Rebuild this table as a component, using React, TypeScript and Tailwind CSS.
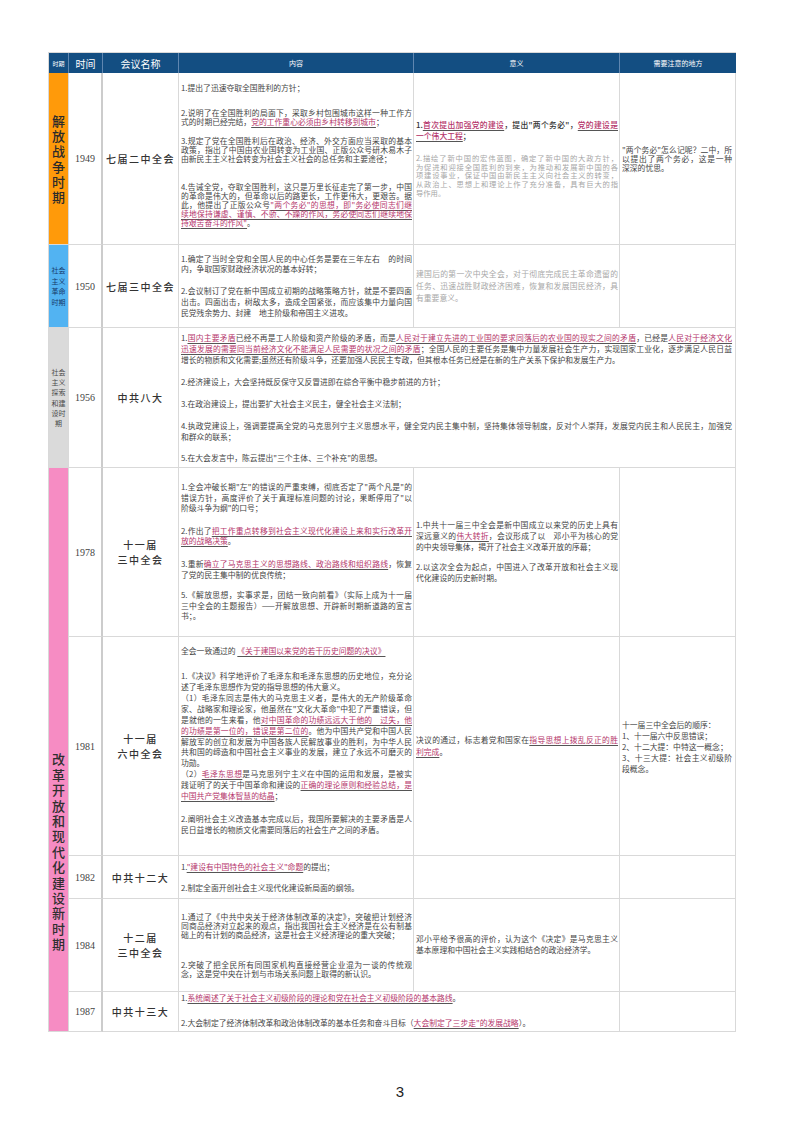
import React from "react";

type Node = React.ReactNode;

const H = ({ children }: { children: Node }) => (
  <span className="text-[#b5356b] underline decoration-[#555] underline-offset-[1.5px]">{children}</span>
);

// one paragraph, written line by line; every line but the last is justified
function P({ lines, className = "", end = true }: { lines: Node[]; className?: string; end?: boolean }) {
  return (
    <div className={className}>
      {lines.map((l, i) => (
        <div key={i} className={i < lines.length - 1 || !end ? "[text-align-last:justify]" : ""}>
          {l}
        </div>
      ))}
    </div>
  );
}

const cell = "border-r border-b border-[#d9d9d9]";
const txt = "flex flex-col justify-center pl-[2px] pr-[1px] text-[7.8px] text-[#444]";
const year = `${cell} border-r-[2px] border-r-[#cccccc] flex items-center justify-center font-['Liberation_Serif',serif] text-[10px] text-[#444]`;
const name = `${cell} flex flex-col items-center justify-center text-[10px] leading-[15px] tracking-[1.5px] font-medium text-[#333]`;

export default function App() {
  return (
    <div className="w-[800px] h-[1132px] bg-white font-['Noto_Sans_CJK_SC','Noto_Sans',sans-serif]">
      <div className="pt-[52px] pl-[48px]">
        <div className="grid w-fit grid-cols-[20px_34px_76px_235px_206px_116px] grid-rows-[20px_172px_83px_140px_169px_219px_43px_93px_40px] border-l border-t border-[#d9d9d9]">
          {/* header */}
          <div className="bg-[#134e82] border-r border-[#5f86b0] flex items-center justify-center text-white text-[6px]">时期</div>
          <div className="bg-[#134e82] border-r border-[#5f86b0] flex items-center justify-center text-white text-[10px]">时间</div>
          <div className="bg-[#134e82] border-r border-[#5f86b0] flex items-center justify-center text-white text-[10px]">会议名称</div>
          <div className="bg-[#134e82] border-r border-[#5f86b0] flex items-center justify-center text-white text-[7px]">内容</div>
          <div className="bg-[#134e82] border-r border-[#5f86b0] flex items-center justify-center text-white text-[7px]">意义</div>
          <div className="bg-[#134e82] flex items-center justify-center text-white text-[7px]">需要注意的地方</div>

          {/* 1949 */}
          <div className={`${cell} bg-[#ff9a0a] flex items-center justify-center text-center text-[13px] leading-[15.3px] font-medium text-[#2b2b2b] px-[3px]`}>
            解放战争时期
          </div>
          <div className={year}>1949</div>
          <div className={name}>七届二中全会</div>
          <div className={`${cell} ${txt} leading-[9.2px] pb-[6px]`}>
            <P lines={["1.提出了迅速夺取全国胜利的方针；"]} />
            <P
              className="mt-[15px]"
              lines={[
                "2.说明了在全国胜利的局面下，采取乡村包围城市这样一种工作方",
                <>式的时期已经完结，<H>党的工作重心必须由乡村转移到城市</H>；</>,
              ]}
            />
            <P
              className="mt-[10px]"
              lines={[
                "3.规定了党在全国胜利后在政治、经济、外交方面应当采取的基本",
                "政策，指出了中国由农业国转变为工业国、正版公众号研木易木子",
                "由新民主主义社会转变为社会主义社会的总任务和主要途径；",
              ]}
            />
            <P
              className="mt-[18px]"
              lines={[
                "4.告诫全党，夺取全国胜利，这只是万里长征走完了第一步，中国",
                "的革命是伟大的，但革命以后的路更长，工作更伟大，更艰苦。据",
                <>此，他提出了正版公众号<H>"两个务必"的思想，即"务必使同志们继</H></>,
                <H>续地保持谦虚、谨慎、不骄、不躁的作风，务必使同志们继续地保</H>,
                <><H>持艰苦奋斗的作风"</H>。</>,
              ]}
            />
          </div>
          <div className={`${cell} ${txt}`}>
            <P
              className="leading-[10.7px] text-[#333] font-medium"
              lines={[
                <>1.<H>首次提出加强党的建设</H>，提出"两个务必"，<H>党的建设是</H></>,
                <><H>一个伟大工程</H>；</>,
              ]}
            />
            <P
              className="mt-[13px] leading-[8.6px] text-[7.3px] text-[#a6a6a6]"
              lines={[
                "2.描绘了新中国的宏伟蓝图，确定了新中国的大政方针，",
                "为促进和迎接全国胜利的到来，为推动和发展新中国的各",
                "项建设事业，保证中国由新民主主义向社会主义的转变，",
                "从政治上、思想上和理论上作了充分准备，具有巨大的指",
                "导作用。",
              ]}
            />
          </div>
          <div className={`${cell} ${txt} pr-[3px] leading-[9px] text-[#333]`}>
            <P lines={['"两个务必"怎么记呢？二中，所', "以提出了两个务必，这是一种", "深深的忧思。"]} />
          </div>

          {/* 1950 */}
          <div className={`${cell} bg-[#52b3f2] flex items-center justify-center text-center text-[7px] leading-[10.5px] text-[#173a6a] px-[2px]`}>
            社会主义革命时期
          </div>
          <div className={year}>1950</div>
          <div className={name}>七届三中全会</div>
          <div className={`${cell} ${txt} leading-[10.7px]`}>
            <P
              lines={[
                "1.确定了当时全党和全国人民的中心任务是要在三年左右　的时间",
                "内，争取国家财政经济状况的基本好转；",
              ]}
            />
            <P
              className="mt-[11px]"
              lines={[
                "2.会议制订了党在新中国成立初期的战略策略方针，就是不要四面",
                "出击。四面出击，树敌太多，造成全国紧张，而应该集中力量向国",
                "民党残余势力、封建　地主阶级和帝国主义进攻。",
              ]}
            />
          </div>
          <div className={`${cell} ${txt} leading-[11.7px] text-[7.4px] text-[#a8a8a8]`}>
            <P
              lines={[
                "建国后的第一次中央全会，对于彻底完成民主革命遗留的",
                "任务、迅速战胜财政经济困难，恢复和发展国民经济，具",
                "有重要意义。",
              ]}
            />
          </div>
          <div className={cell} />

          {/* 1956 */}
          <div className={`${cell} bg-[#dadada] flex items-center justify-center text-center text-[7px] leading-[10.3px] text-[#4a4a4a] px-[2px]`}>
            社会主义探索和建设时期
          </div>
          <div className={year}>1956</div>
          <div className={name}>中共八大</div>
          <div className={`${cell} ${txt} col-span-3 leading-[11px] pr-[3px]`}>
            <P
              lines={[
                <>
                  1.<H>国内主要矛盾</H>已经不再是工人阶级和资产阶级的矛盾，而是
                  <H>人民对于建立先进的工业国的要求同落后的农业国的现实之间的矛盾</H>，已经是<H>人民对于经济文化</H>
                </>,
                <>
                  <H>迅速发展的需要同当前经济文化不能满足人民需要的状况之间的矛盾</H>
                  ；全国人民的主要任务是集中力量发展社会生产力，实现国家工业化，逐步满足人民日益
                </>,
                "增长的物质和文化需要;虽然还有阶级斗争，还要加强人民民主专政，但其根本任务已经是在新的生产关系下保护和发展生产力。",
              ]}
            />
            <P className="mt-[11px]" lines={["2.经济建设上，大会坚持既反保守又反冒进即在综合平衡中稳步前进的方针；"]} />
            <P className="mt-[11px]" lines={["3.在政治建设上，提出要扩大社会主义民主，健全社会主义法制；"]} />
            <P
              className="mt-[11px]"
              lines={[
                "4.执政党建设上，强调要提高全党的马克思列宁主义思想水平，健全党内民主集中制，坚持集体领导制度，反对个人崇拜，发展党内民主和人民民主，加强党",
                "和群众的联系；",
              ]}
            />
            <P className="mt-[10px]" lines={['5.在大会发言中，陈云提出"三个主体、三个补充"的思想。']} />
          </div>

          {/* 1978 */}
          <div className={`${cell} row-span-5 bg-[#f68cc3] flex items-center justify-center text-center text-[13px] leading-[15.4px] font-medium text-[#2f2f2f] px-[3px] pt-[204px]`}>
            改革开放和现代化建设新时期
          </div>
          <div className={year}>1978</div>
          <div className={name}>
            <span>十一届</span>
            <span>三中全会</span>
          </div>
          <div className={`${cell} ${txt} leading-[10.6px]`}>
            <P
              lines={[
                '1.全会冲破长期"左"的错误的严重束缚，彻底否定了"两个凡是"的',
                '错误方针，高度评价了关于真理标准问题的讨论，果断停用了"以',
                '阶级斗争为纲"的口号；',
              ]}
            />
            <P
              className="mt-[12px]"
              lines={[
                <>2.作出了<H>把工作重点转移到社会主义现代化建设上来和实行改革开</H></>,
                <><H>放的战略决策</H>。</>,
              ]}
            />
            <P
              className="mt-[12px]"
              lines={[
                <>3.重新<H>确立了马克思主义的思想路线、政治路线和组织路线</H>，恢复</>,
                "了党的民主集中制的优良传统；",
              ]}
            />
            <P
              className="mt-[10px]"
              lines={[
                "5.《解放思想，实事求是，团结一致向前看》（实际上成为十一届",
                "三中全会的主题报告）——开解放思想、开辟新时期新道路的宣言",
                "书；。",
              ]}
            />
          </div>
          <div className={`${cell} ${txt} leading-[10.8px]`}>
            <P
              lines={[
                "1.中共十一届三中全会是新中国成立以来党的历史上具有",
                <>深远意义的<H>伟大转折</H>，会议形成了以　邓小平为核心的党</>,
                "的中央领导集体，揭开了社会主义改革开放的序幕；",
              ]}
            />
            <P className="mt-[10px]" lines={["2.以这次全会为起点，中国进入了改革开放和社会主义现", "代化建设的历史新时期。"]} />
          </div>
          <div className={cell} />

          {/* 1981 */}
          <div className={year}>1981</div>
          <div className={name}>
            <span>十一届</span>
            <span>六中全会</span>
          </div>
          <div className={`${cell} ${txt} leading-[10.9px] pb-[10px]`}>
            <P lines={[<>全会一致通过的 <H>《关于建国以来党的若干历史问题的决议》</H></>]} />
            <P
              className="mt-[14px]"
              lines={["1.《决议》科学地评价了毛泽东和毛泽东思想的历史地位，充分论", "述了毛泽东思想作为党的指导思想的伟大意义。"]}
            />
            <P
              lines={[
                "（1）毛泽东同志是伟大的马克思主义者，是伟大的无产阶级革命",
                '家、战略家和理论家，他虽然在"文化大革命"中犯了严重错误，但',
                <>是就他的一生来看，他<H>对中国革命的功绩远远大于他的　过失，他</H></>,
                <><H>的功绩是第一位的，错误是第二位的</H>。他为中国共产党和中国人民</>,
                "解放军的创立和发展为中国各族人民解放事业的胜利，为中华人民",
                "共和国的缔造和中国社会主义事业的发展，建立了永远不可磨灭的",
                "功勋。",
              ]}
            />
            <P
              lines={[
                <>（2）<H>毛泽东思想</H>是马克思列宁主义在中国的运用和发展，是被实</>,
                <>践证明了的关于中国革命和建设的<H>正确的理论原则和经验总结，是</H></>,
                <><H>中国共产党集体智慧的结晶</H>；</>,
              ]}
            />
            <P
              className="mt-[12px]"
              lines={["2.阐明社会主义改造基本完成以后，我国所要解决的主要矛盾是人", "民日益增长的物质文化需要同落后的社会生产之间的矛盾。"]}
            />
          </div>
          <div className={`${cell} ${txt} leading-[12px]`}>
            <P lines={[<>决议的通过，标志着党和国家在<H>指导思想上拨乱反正的胜</H></>, <><H>利完成</H>。</>]} />
          </div>
          <div className={`${cell} ${txt} leading-[11px] text-[#333]`}>
            <div>十一届三中全会后的顺序：</div>
            <div>1、十一届六中反思错误；</div>
            <div>2、十二大提：中特这一概念；</div>
            <div className="[text-align-last:justify] pr-[2px]">3、十三大提：社会主义初级阶</div>
            <div>段概念。</div>
          </div>

          {/* 1982 */}
          <div className={year}>1982</div>
          <div className={name}>中共十二大</div>
          <div className={`${cell} ${txt} leading-[10px]`}>
            <P lines={[<>1.<H>"建设有中国特色的社会主义"命题</H>的提出；</>]} />
            <P className="mt-[11px]" lines={["2.制定全面开创社会主义现代化建设新局面的纲领。"]} />
          </div>
          <div className={cell} />
          <div className={cell} />

          {/* 1984 */}
          <div className={year}>1984</div>
          <div className={name}>
            <span>十二届</span>
            <span>三中全会</span>
          </div>
          <div className={`${cell} ${txt} leading-[9.2px]`}>
            <P
              lines={[
                "1.通过了《中共中央关于经济体制改革的决定》，突破把计划经济",
                "同商品经济对立起来的观点，指出我国社会主义经济是在公有制基",
                "础上的有计划的商品经济，这是社会主义经济理论的重大突破；",
              ]}
            />
            <P
              className="mt-[20px]"
              lines={["2.突破了把全民所有同国家机构直接经营企业混为一谈的传统观", "念，这是党中央在计划与市场关系问题上取得的新认识。"]}
            />
          </div>
          <div className={`${cell} ${txt} leading-[10.7px]`}>
            <P lines={["邓小平给予很高的评价，认为这个《决定》是马克思主义", "基本原理和中国社会主义实践相结合的政治经济学。"]} />
          </div>
          <div className={cell} />

          {/* 1987 */}
          <div className={year}>1987</div>
          <div className={name}>中共十三大</div>
          <div className={`${cell} ${txt} col-span-2 leading-[10px] pb-[3px]`}>
            <P lines={[<>1.<H>系统阐述了关于社会主义初级阶段的理论和党在社会主义初级阶段的基本路线</H>。</>]} />
            <P
              className="mt-[15px]"
              lines={[<>2.大会制定了经济体制改革和政治体制改革的基本任务和奋斗目标（<H>大会制定了三步走"的发展战略</H>）。</>]}
            />
          </div>
          <div className={cell} />
        </div>

        <div className="w-[704px] mt-[49px] flex justify-center font-['Liberation_Sans',sans-serif] text-[15px] text-[#222]">3</div>
      </div>
    </div>
  );
}
